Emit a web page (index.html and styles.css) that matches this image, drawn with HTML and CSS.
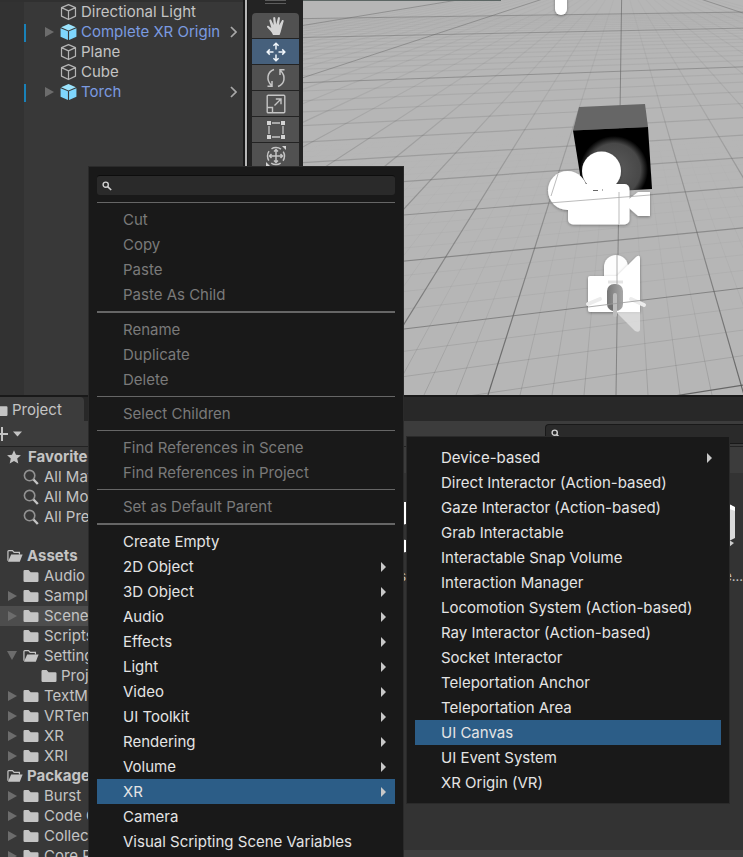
FILE: index.html
```html
<!DOCTYPE html>
<html lang="en">
<head>
<meta charset="utf-8">
<title>Editor</title>
<link rel="stylesheet" href="styles.css">
</head>
<body>
<svg class="defs" aria-hidden="true">
  <symbol id="cube" viewBox="0 0 18 18"><path d="M9 1.2 16.4 4.4V13.4L9 17 1.6 13.4V4.4ZM1.6 4.4 9 7.8 16.4 4.4M9 7.8V17" fill="none" stroke="#b4b4b4" stroke-width="1.3" stroke-linejoin="round"/></symbol>
  <symbol id="prefab" viewBox="0 0 18 18"><path d="M9 .4 16.8 3.900 9 7.3 1.2 3.900Z" fill="#9be3fc"/><path d="M.6 4.900 8.400 8.300V17.600L.6 14Z" fill="#7fd6fd"/><path d="M17.400 4.900 9.600 8.300V17.600L17.400 14Z" fill="#7fd6fd"/></symbol>
  <symbol id="folder" viewBox="0 0 16 14"><path d="M.5 2.2Q.5 1 1.7 1H5.6L7.6 3.2H14.4Q15.5 3.2 15.5 4.3V11.8Q15.5 13 14.3 13H1.7Q.5 13 .5 11.8Z" fill="#c4c4c4"/></symbol>
  <symbol id="folder-open" viewBox="0 0 17 14"><path d="M1 12V2.3Q1 1.2 2 1.2H5.8L7.6 3.2H13.2V5.5" fill="none" stroke="#c4c4c4" stroke-width="1.3"/><path d="M4.4 5.5H16.6L13.6 13H1Z" fill="#c4c4c4"/></symbol>
  <symbol id="lens" viewBox="0 0 16 16"><circle cx="6.6" cy="6.6" r="5.2" fill="none" stroke="#929292" stroke-width="1.6"/><path d="M10.5 10.5 14.8 15" stroke="#c4c4c4" stroke-width="2.4"/></symbol>
  <symbol id="lens-small" viewBox="0 0 10 10"><circle cx="3.7" cy="3.7" r="2.6" fill="none" stroke="#d2d2d2" stroke-width="1.4"/><path d="M5.6 5.6 9.2 9" stroke="#d2d2d2" stroke-width="1.6"/></symbol>
  <symbol id="star" viewBox="0 0 14 14"><path d="M7 .3 9 4.8 13.9 5.3 10.2 8.6 11.3 13.5 7 11 2.7 13.5 3.8 8.6.1 5.3 5 4.8Z" fill="#c4c4c4"/></symbol>
  <symbol id="chevron" viewBox="0 0 7 12"><path d="M1 1 6 6 1 11" fill="none" stroke="#a8a8a8" stroke-width="1.7"/></symbol>
</svg>

<main class="editor">
  <div class="upper">
    <section class="hierarchy" aria-label="Hierarchy">
      <ul class="rows">
        <li class="row"><svg class="icon"><use href="#cube"/></svg><span>Directional Light</span></li>
        <li class="row row-prefab"><svg class="icon"><use href="#prefab"/></svg><span>Complete XR Origin</span><svg class="chevron"><use href="#chevron"/></svg></li>
        <li class="row"><svg class="icon"><use href="#cube"/></svg><span>Plane</span></li>
        <li class="row"><svg class="icon"><use href="#cube"/></svg><span>Cube</span></li>
        <li class="row row-prefab"><svg class="icon"><use href="#prefab"/></svg><span>Torch</span><svg class="chevron"><use href="#chevron"/></svg></li>
      </ul>
    </section>
    <div class="scene-edge"></div>
    <div class="tools" role="toolbar" aria-label="Tools">
      <div class="grip"></div>
      <button class="tool" aria-label="View"><svg viewBox="0 0 20 20"><path d="M7 19 C6 16 3 13.500 1 11 Q.8 9.500 2.300 9.800 L5.300 12 3.300 4.500 Q3.500 3 5 3.600 L7.600 9 7.200 1.800 Q8 .3 9.200 1.600 L10.200 8.600 12 1.500 Q13.300 .4 13.900 1.900 L13.100 9.300 16.200 4.100 Q17.700 3.500 17.700 5 L15.600 12.500 Q14.800 16 13.600 19Z" fill="#d4d4d4"/></svg></button>
      <button class="tool tool-on" aria-label="Move"><svg viewBox="0 0 20 20" fill="none" stroke="#f0f5fa" stroke-width="1.500"><path d="M10 7.500V1M10 12.500V19M7.500 10H1M12.500 10H19M7.400 3.800 10 1.200 12.600 3.800M7.400 16.200 10 18.800 12.600 16.200M3.800 7.400 1.200 10 3.800 12.600M16.200 7.400 18.800 10 16.200 12.600"/></svg></button>
      <button class="tool" aria-label="Rotate"><svg viewBox="0 0 20 20" fill="none" stroke="#c4c4c4" stroke-width="1.500"><path d="M8 1.500C1 4 0 12 5.500 17.500M1.500 18.300H6V13M12 18.500C19 16 20 8 14.500 2.500M18.500 1.700H14V7"/></svg></button>
      <button class="tool" aria-label="Scale"><svg viewBox="0 0 20 20" fill="none" stroke="#c4c4c4" stroke-width="1.400"><rect x="1.200" y="1.200" width="17.600" height="17.600" rx="1"/><path d="M1.200 13.500H6.500V18.800M8.500 11.500 14.500 5.500M9.800 5H15V10.200"/></svg></button>
      <button class="tool" aria-label="Rect"><svg viewBox="0 0 20 20"><path d="M3 6V14M17 6V14M6 3H14M6 17H14" stroke="#c4c4c4" stroke-width="1.300"/><path d="M1 1H5V5H1ZM15 1H19V5H15ZM1 15H5V19H1ZM15 15H19V19H15Z" fill="#d4d4d4"/></svg></button>
      <button class="tool" aria-label="Transform"><svg viewBox="0 0 20 20" fill="none" stroke="#c4c4c4" stroke-width="1.500"><circle cx="10" cy="10" r="8.500" stroke-dasharray="10 3.350" stroke-dashoffset="5"/><path d="M10 3.500V16.500M3.500 10H16.500M8 5.500 10 3.500 12 5.500M8 14.500 10 16.500 12 14.500M5.500 8 3.500 10 5.500 12M14.500 8 16.500 10 14.500 12"/><path d="M16 0H20V4ZM0 16V20H4Z" fill="#d4d4d4" stroke="none"/></svg></button>
    </div>
    <svg class="scene" viewBox="303 0 440 395" preserveAspectRatio="xMinYMin slice" role="img" aria-label="Scene view">
      <defs>
        <linearGradient id="major" gradientUnits="userSpaceOnUse" x1="0" y1="0" x2="0" y2="395"><stop offset="0" stop-color="#606060" stop-opacity=".04"/><stop offset=".25" stop-color="#606060" stop-opacity=".14"/><stop offset=".5" stop-color="#606060" stop-opacity=".42"/><stop offset="1" stop-color="#505050" stop-opacity=".8"/></linearGradient>
        <linearGradient id="minor" gradientUnits="userSpaceOnUse" x1="0" y1="130" x2="0" y2="395"><stop offset="0" stop-color="#707070" stop-opacity="0"/><stop offset=".6" stop-color="#707070" stop-opacity=".13"/><stop offset="1" stop-color="#707070" stop-opacity=".42"/></linearGradient>
        <radialGradient id="glow" gradientUnits="userSpaceOnUse" cx="614" cy="170" r="34"><stop offset="0" stop-color="#5c5c5c"/><stop offset=".78" stop-color="#484848"/><stop offset="1" stop-color="#000"/></radialGradient>
        <linearGradient id="capsule"><stop offset="0" stop-color="#777"/><stop offset="1" stop-color="#a8a8a8"/></linearGradient>
        <filter id="soft" x="-20%" y="-20%" width="140%" height="150%"><feDropShadow dx="0" dy="1" stdDeviation="1.500" flood-opacity=".35"/></filter>
      </defs>
      <rect x="303" y="0" width="440" height="395" fill="#b6b6b6"/>
      <g id="grid"></g>
      <path d="M303 .5H501" stroke="#5c6664"/>
      <rect x="555" y="-12" width="12" height="27" rx="6" fill="#fff" filter="url(#soft)"/>
      <path d="M579 107 645 104 648 127 573 130.500Z" fill="#666"/>
      <path d="M573 130.500 648 127 652 189 583 193Z" fill="url(#glow)"/>
      <g fill="#fff" filter="url(#soft)"><circle cx="567.500" cy="190.500" r="19.500"/><circle cx="601.500" cy="171" r="19.500"/><rect x="568" y="184" width="61.500" height="40.500" rx="5"/><path d="M629 199 638 192H650V216H638L629 208Z"/></g>
      <path d="M549 203 650 195M558 174 551 196M619 192V224" stroke="#aaa" stroke-width=".8"/><path d="M593 190.500H598M602 190H603" stroke="#666"/>
      <path d="M604 278V267A12 12 0 0 1 628 267V278Z" fill="#fdfdfd" filter="url(#soft)"/>
      <path d="M590 276H617L636 257Q640 254 640 258V312H590Q588 312 588 310V278Q588 276 590 276Z" fill="#fff" filter="url(#soft)"/>
      <path d="M616 312H640V329Q640 333 635 331Z" fill="#e2e2e2" opacity=".8"/>
      <path d="M588 304 600 299M631 299 644 305" stroke="#ececec" stroke-width="4" stroke-linecap="round"/>
      <path d="M608 282H623" stroke="#e4e4e4" stroke-width="3"/>
      <rect x="607" y="284" width="16" height="27" rx="7" fill="url(#capsule)"/><path d="M608 306Q614 300 616 311Q609 311 608 306Z" fill="#707070"/>
      <rect x="613" y="293" width="4" height="24" rx="2" fill="#bdbdbd"/>
      <path d="M617 254V284M588 307 644 300" stroke="#999" stroke-width=".8"/>
    </svg>
  </div>

  <section class="project">
    <div class="tabs"><div class="tab"><svg class="tab-icon"><use href="#folder"/></svg><span>Project</span></div></div>
    <div class="bar">
      <button class="add" aria-label="Create"><svg viewBox="0 0 24 14"><path d="M0 7H8M2 0V14" stroke="#c4c4c4" stroke-width="2"/><path d="M13 4.500H22L17.500 9.500Z" fill="#c4c4c4"/></svg></button>
      <label class="bar-search"><svg><use href="#lens-small"/></svg><input type="search" aria-label="Search assets"></label>
    </div>
    <div class="browser">
      <div class="tree">
        <ul class="rows">
          <li class="row head"><svg class="star"><use href="#star"/></svg><span>Favorites</span></li>
          <li class="row leaf"><svg class="folder lens"><use href="#lens"/></svg><span>All Materials</span></li>
          <li class="row leaf"><svg class="folder lens"><use href="#lens"/></svg><span>All Models</span></li>
          <li class="row leaf"><svg class="folder lens"><use href="#lens"/></svg><span>All Prefabs</span></li>
        </ul>
        <ul class="rows">
          <li class="row head"><svg class="folder"><use href="#folder-open"/></svg><span>Assets</span></li>
          <li class="row leaf"><svg class="folder"><use href="#folder"/></svg><span>Audio</span></li>
          <li class="row leaf more"><svg class="folder"><use href="#folder"/></svg><span>Samples</span></li>
          <li class="row leaf more current"><svg class="folder"><use href="#folder"/></svg><span>Scenes</span></li>
          <li class="row leaf"><svg class="folder"><use href="#folder"/></svg><span>Scripts</span></li>
          <li class="row leaf open"><svg class="folder"><use href="#folder-open"/></svg><span>Settings</span></li>
          <li class="row leaf deep"><svg class="folder"><use href="#folder"/></svg><span>Project</span></li>
          <li class="row leaf more"><svg class="folder"><use href="#folder"/></svg><span>TextMesh</span></li>
          <li class="row leaf more"><svg class="folder"><use href="#folder"/></svg><span>VRTemplate</span></li>
          <li class="row leaf more"><svg class="folder"><use href="#folder"/></svg><span>XR</span></li>
          <li class="row leaf more"><svg class="folder"><use href="#folder"/></svg><span>XRI</span></li>
          <li class="row head"><svg class="folder"><use href="#folder-open"/></svg><span>Packages</span></li>
          <li class="row leaf more"><svg class="folder"><use href="#folder"/></svg><span>Burst</span></li>
          <li class="row leaf more"><svg class="folder"><use href="#folder"/></svg><span>Code C</span></li>
          <li class="row leaf more"><svg class="folder"><use href="#folder"/></svg><span>Collections</span></li>
          <li class="row leaf more"><svg class="folder"><use href="#folder"/></svg><span>Core R</span></li>
        </ul>
      </div>
      <div class="assets">
        <div class="crumbs"></div>
        <div class="grid">
          <figure class="asset"><svg viewBox="0 0 60 60"><path d="M30 0 60 0V22L30 30 0 22V6ZM30 34 60 38V50L30 56 0 50V40Z" fill="#fff"/></svg><figcaption>s</figcaption></figure>
          <figure class="asset"><svg viewBox="0 0 60 60"><path d="M30 0 52 2 58 6V36L30 50 0 36V6Z" fill="#dadada"/><path d="M52 2 58 5V9L50 6Z" fill="#fff"/><path d="M52 38 57 41 52 45Z" fill="#ccc"/></svg><figcaption>e...</figcaption></figure>
        </div>
        <div class="status"></div>
      </div>
    </div>
  </section>
</main>

<div class="menu menu-main" role="menu">
  <label class="menu-search"><svg><use href="#lens-small"/></svg><input type="search" aria-label="Search menu"></label>
  <hr>
  <button role="menuitem" disabled>Cut</button>
  <button role="menuitem" disabled>Copy</button>
  <button role="menuitem" disabled>Paste</button>
  <button role="menuitem" disabled>Paste As Child</button>
  <hr class="thick">
  <button role="menuitem" disabled>Rename</button>
  <button role="menuitem" disabled>Duplicate</button>
  <button role="menuitem" disabled>Delete</button>
  <hr>
  <button role="menuitem" disabled>Select Children</button>
  <hr>
  <button role="menuitem" disabled>Find References in Scene</button>
  <button role="menuitem" disabled>Find References in Project</button>
  <hr>
  <button role="menuitem" disabled>Set as Default Parent</button>
  <hr class="thick">
  <button role="menuitem">Create Empty</button>
  <button role="menuitem" class="sub">2D Object</button>
  <button role="menuitem" class="sub">3D Object</button>
  <button role="menuitem" class="sub">Audio</button>
  <button role="menuitem" class="sub">Effects</button>
  <button role="menuitem" class="sub">Light</button>
  <button role="menuitem" class="sub">Video</button>
  <button role="menuitem" class="sub">UI Toolkit</button>
  <button role="menuitem" class="sub">Rendering</button>
  <button role="menuitem" class="sub">Volume</button>
  <button role="menuitem" class="sub active">XR</button>
  <button role="menuitem">Camera</button>
  <button role="menuitem">Visual Scripting Scene Variables</button>
</div>

<div class="menu menu-xr" role="menu">
  <button role="menuitem" class="sub">Device-based</button>
  <button role="menuitem">Direct Interactor (Action-based)</button>
  <button role="menuitem">Gaze Interactor (Action-based)</button>
  <button role="menuitem">Grab Interactable</button>
  <button role="menuitem">Interactable Snap Volume</button>
  <button role="menuitem">Interaction Manager</button>
  <button role="menuitem">Locomotion System (Action-based)</button>
  <button role="menuitem">Ray Interactor (Action-based)</button>
  <button role="menuitem">Socket Interactor</button>
  <button role="menuitem">Teleportation Anchor</button>
  <button role="menuitem">Teleportation Area</button>
  <button role="menuitem" class="active">UI Canvas</button>
  <button role="menuitem">UI Event System</button>
  <button role="menuitem">XR Origin (VR)</button>
</div>
<script src="grid.js"></script>
</body>
</html>
```
FILE: styles.css
```css
* { box-sizing: border-box; }
body {
  margin: 0;
  height: 100vh;
  overflow: hidden;
  position: relative;
  background: #191919;
  color: #c4c4c4;
  font: 15px/20px Inter, "Liberation Sans", sans-serif;
}
button, input { font: inherit; color: inherit; border: 0; padding: 0; background: none; outline: none; }
ul { list-style: none; margin: 0; padding: 0; }
.defs { position: absolute; width: 0; height: 0; }

.editor { display: flex; flex-direction: column; height: 100%; }
.upper { display: flex; height: 395px; flex: none; }

.hierarchy {
  flex: none;
  width: 243px;
  padding-left: 24px;
  border-top: 2px solid #303030;
  background: linear-gradient(to right, #323232 24px, #383838 24px);
}
.row { display: flex; align-items: center; height: 20px; white-space: nowrap; }
.hierarchy .row { gap: 4px; padding: 0 6px 0 36px; position: relative; }
.icon { width: 17px; height: 18px; flex: none; }
.row-prefab { color: #7b9be0; }
.row-prefab::before {
  content: "";
  position: absolute;
  left: 0; top: 2px;
  width: 2px; height: 18px;
  background: #1982b9;
}
.row-prefab::after {
  content: "";
  position: absolute;
  left: 21px; top: 5px;
  border: solid transparent;
  border-width: 5px 0 5px 9px;
  border-left-color: #6c6c6c;
}
.chevron { width: 7px; height: 12px; margin-left: auto; }

.scene-edge { flex: none; width: 5px; background: #b6b6b6; border: solid #191919; border-width: 0 1px 0 2px; }
.tools { flex: none; width: 55px; padding: 0 4px; background: #232323; display: flex; flex-direction: column; gap: 1px; }
.grip { height: 4px; margin: 0 13px 8px; border: solid #5c5c5c; border-width: 1px 0; }
.tool { height: 25px; flex: none; width: 47px; background: #515151; display: grid; place-items: center; }
.tool:nth-child(2) { border-radius: 4px 4px 0 0; }
.tool svg { width: 20px; height: 20px; display: block; }
.tool-on { background: #46607c; }
.scene { flex: 1; min-width: 0; height: 100%; display: block; }

.project { flex: 1; min-height: 0; display: flex; flex-direction: column; border-top: 2px solid #191919; background: #383838; }
.tabs { height: 24px; background: #282828; }
.tab { width: 84px; height: 24px; background: #3c3c3c; display: flex; align-items: center; border-radius: 0 4px 0 0; overflow: hidden; padding-top: 2px; }
.tab-icon { width: 16px; height: 14px; margin-left: -8px; margin-right: 4px; flex: none; }
.bar { height: 26px; background: #3c3c3c; border-bottom: 1px solid #232323; display: flex; align-items: center; justify-content: space-between; }
.add { width: 24px; height: 14px; }
.add svg { display: block; width: 24px; height: 14px; }
.bar-search { width: 198px; height: 20px; border: 1px solid #191919; border-right: 0; border-radius: 4px 0 0 4px; background: #2a2a2a; display: flex; align-items: center; padding-left: 5px; }
.bar-search svg { width: 10px; height: 10px; flex: none; }
.bar-search input { flex: 1; min-width: 0; }
.browser { flex: 1; min-height: 0; display: flex; overflow: hidden; }
.tree { width: 180px; flex: none; display: flex; flex-direction: column; gap: 19px; }
.tree .row { padding-left: 7px; gap: 4px; flex: none; position: relative; }
.tree .head { font-weight: 700; }
.star { width: 14px; height: 14px; margin-right: 3px; flex: none; }
.folder { width: 16px; height: 14px; flex: none; }
.folder.lens { height: 16px; }
.tree .leaf { padding-left: 23px; gap: 5px; }
.tree .deep { padding-left: 41px; gap: 4px; }
.tree .current { background: #4d4d4d; }
.more::before, .open::before {
  content: "";
  position: absolute;
  left: 8px; top: 5px;
  border: solid transparent;
  border-width: 5px 0 5px 9px;
  border-left-color: #6c6c6c;
}
.open::before { left: 7px; border-width: 9px 5px 0; border-left-color: transparent; border-top-color: #6c6c6c; }
.assets { flex: 1; min-width: 0; display: flex; flex-direction: column; background: #333; }
.crumbs { height: 26px; background: #3c3c3c; }
.grid { flex: 1; display: flex; justify-content: space-between; padding: 29px 0 0 166px; }
.asset { margin: 0; width: 60px; font-size: 13px; text-align: right; }
.asset svg { display: block; width: 60px; height: 60px; }
.asset:last-child { width: 66px; }
.asset figcaption { padding-top: 4px; }
.status { height: 7px; background: #3f3f3f; }

.menu {
  position: absolute;
  display: flex;
  flex-direction: column;
  padding: 8px;
  background: #191919;
  border: 1px solid #2a2a2a;
  color: #e4e4e4;
}
.menu-main { left: 88px; top: 166px; width: 316px; bottom: -6px; overflow: hidden; }
.menu-xr { left: 406px; top: 436px; width: 324px; }
.menu-search { display: flex; align-items: center; height: 20px; flex: none; margin-bottom: 3px; padding-left: 5px; background: #2a2a2a; border-top: 1px solid #0d0d0d; border-radius: 3px; }
.menu-search svg { width: 10px; height: 10px; flex: none; }
.menu-search input { flex: 1; min-width: 0; }
.menu hr { flex: none; width: 100%; height: 1px; margin: 4px 0; border: 0; background: #666; }
.menu hr.thick { height: 2px; }
.menu button { display: flex; align-items: center; flex: none; height: 25px; padding: 0 9px 0 26px; text-align: left; white-space: nowrap; }
.menu button:disabled { color: #7a7a7a; }
.menu .active { background: #2c5d87; }
.sub::after {
  content: "";
  margin-left: auto;
  border: solid transparent;
  border-width: 5px 0 5px 5px;
  border-left-color: #c8c8c8;
}
```
FILE: grid.js
```js
// Floor grid in perspective: one family of lines fans out from below the
// horizon centre, the other converges far to the right.
const HORIZON = -27;
const FAN_X = 622;
const SIDE_X = 3347;
const grid = document.getElementById("grid");

function line(x1, y1, x2, y2, stroke, width) {
  const el = document.createElementNS("http://www.w3.org/2000/svg", "path");
  el.setAttribute("d", `M${x1} ${y1} ${x2} ${y2}`);
  el.setAttribute("stroke", stroke);
  el.setAttribute("stroke-width", width);
  grid.appendChild(el);
}

function style(i) {
  if (i === 0) return ["#60606099", 1];
  if (i % 40 === 0) return ["#60606070", 1];
  return i % 4 === 0 ? ["url(#major)", 1.2] : ["url(#minor)", 0.8];
}

for (let i = -80; i <= 48; i++) {
  line(FAN_X, HORIZON, 616 + 32 * i, 395, ...style(i));
}
for (let i = -4; i <= 120; i++) {
  const depth = 1 / (0.002809 + 0.0001655 * i);
  const yAt = x => HORIZON + depth * (SIDE_X - x) / (SIDE_X - 404);
  line(303, yAt(303), 743, yAt(743), ...style(i));
}
```
